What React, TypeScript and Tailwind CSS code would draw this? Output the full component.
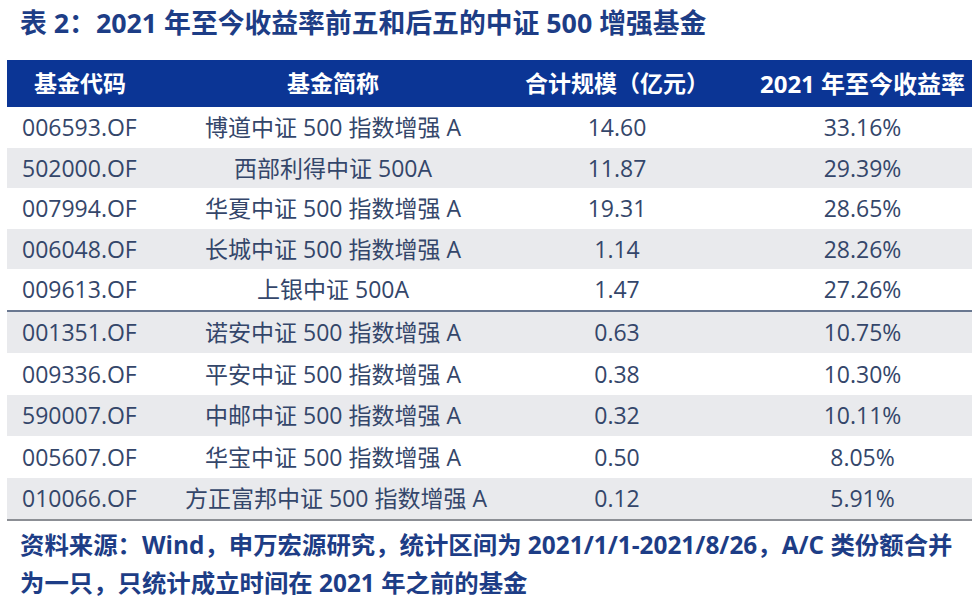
import React from 'react'

const top = [
  ['006593.OF', '博道中证 500 指数增强 A', '14.60', '33.16%'],
  ['502000.OF', '西部利得中证 500A', '11.87', '29.39%'],
  ['007994.OF', '华夏中证 500 指数增强 A', '19.31', '28.65%'],
  ['006048.OF', '长城中证 500 指数增强 A', '1.14', '28.26%'],
  ['009613.OF', '上银中证 500A', '1.47', '27.26%'],
]

const bottom = [
  ['001351.OF', '诺安中证 500 指数增强 A', '0.63', '10.75%'],
  ['009336.OF', '平安中证 500 指数增强 A', '0.38', '10.30%'],
  ['590007.OF', '中邮中证 500 指数增强 A', '0.32', '10.11%'],
  ['005607.OF', '华宝中证 500 指数增强 A', '0.50', '8.05%'],
  ['010066.OF', '方正富邦中证 500 指数增强 A', '0.12', '5.91%'],
]

function Row({ r, odd, tall }: { r: string[]; odd: boolean; tall?: boolean }) {
  return (
    <div
      className={`flex items-center whitespace-nowrap text-[23px] text-[#34466a] ${tall ? 'h-[41.4px]' : 'h-[40.6px]'} ${
        odd ? 'bg-[#e9eaed]' : 'bg-white'
      }`}
    >
      <div className="w-[178px] pl-[15px]">{r[0]}</div>
      <div className="w-[296px] text-center">{r[1]}</div>
      <div className="w-[272px] text-center">{r[2]}</div>
      <div className="flex-1 text-center">{r[3]}</div>
    </div>
  )
}

export default function App() {
  return (
    <div className="w-[978px] h-[606px] bg-white overflow-hidden font-['Open_Sans','Noto_Sans_CJK_SC',sans-serif]">
      <h1 className="pl-[20px] pt-[3px] h-[60px] whitespace-nowrap text-[26.8px] font-bold text-[#1d3d86]">
        表 2：2021 年至今收益率前五和后五的中证 500 增强基金
      </h1>
      <div className="ml-[7px] mr-[6px]">
        <div className="flex h-[47px] items-center whitespace-nowrap bg-[#0b3595] text-[23px] font-bold text-white">
          <div className="w-[178px] pl-[27px]">基金代码</div>
          <div className="w-[296px] text-center">基金简称</div>
          <div className="w-[272px] text-center">合计规模（亿元）</div>
          <div className="flex-1 text-center text-[24px]">2021 年至今收益率</div>
        </div>
        {top.map((r, i) => (
          <Row key={r[0]} r={r} odd={i % 2 === 1} />
        ))}
        <div className="h-[2px] bg-[#6a7891]" />
        {bottom.map((r, i) => (
          <Row key={r[0]} r={r} odd={i % 2 === 0} tall />
        ))}
        <div className="h-[2px] bg-[#8c8f95]" />
      </div>
      <div className="pl-[20px] pt-[5px] text-[24.4px] font-bold leading-[38px] text-[#1d3d86] whitespace-nowrap">
        <div>资料来源：Wind，申万宏源研究，统计区间为 2021/1/1-2021/8/26，A/C 类份额合并</div>
        <div>为一只，只统计成立时间在 2021 年之前的基金</div>
      </div>
    </div>
  )
}
